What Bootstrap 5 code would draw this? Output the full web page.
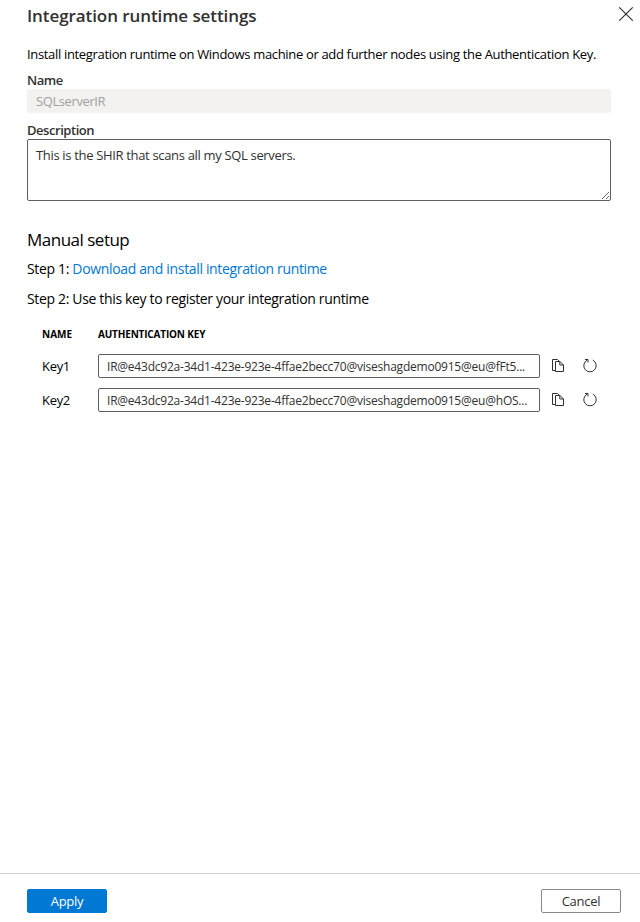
<!DOCTYPE html>
<html lang="en">
<head>
<meta charset="utf-8">
<meta name="viewport" content="width=device-width, initial-scale=1">
<title>Integration runtime settings</title>
<link href="https://cdn.jsdelivr.net/npm/bootstrap@5.3.0/dist/css/bootstrap.min.css" rel="stylesheet">
<script src="https://cdn.jsdelivr.net/npm/bootstrap@5.3.0/dist/js/bootstrap.bundle.min.js" defer></script>
<style>
body{font-family:"Segoe UI","Open Sans","Noto Sans",sans-serif;font-size:13px;line-height:20px;color:#000;background:#fff}
.panel{height:922px}
.panel-head{height:44px;padding:5px 6px 0 27px}
.panel-title{font-size:17px;line-height:22px;font-weight:600;color:#323130;letter-spacing:-.08px}
.close-btn{width:16px;height:16px;margin-top:1px}
.panel-main{padding:0 29px 0 27px}
.intro{height:27px;letter-spacing:-.333px;white-space:nowrap}
.field-label{font-weight:600;color:#323130;line-height:18px;letter-spacing:-.45px;display:block}
.form-control{font-size:12px;border:1px solid #605e5c;border-radius:2px;color:#323130;padding:0 8px}
.name-box{height:24px;min-height:0;line-height:22px;font-size:13px;letter-spacing:-.4px}
.name-box:disabled{background:#f3f2f1;border-color:#f3f2f1;color:#a19f9d}
.desc-box,textarea.form-control.desc-box{height:62px;min-height:0;padding-top:5px;line-height:20px;font-size:13px;letter-spacing:-.33px}
.section-title{font-size:17px;line-height:24px;font-weight:400;letter-spacing:-.5px;margin-top:27px}
.step{font-size:14px;line-height:20px;letter-spacing:-.343px}
.step a{color:#0078d4}
.step-one{margin:7px 0 10px}
.step-two{margin:0 0 17px}
.keys{padding:0 0 0 15px}
.keys-head{font-size:10px;font-weight:700;line-height:16px;margin-bottom:12px}
.auth-head{letter-spacing:-.17px}
.key-name{width:56px}
.key-row{height:24px;margin-bottom:10px}
.key-row .key-name{letter-spacing:-.3px}
.key-box{width:442px;height:24px;min-height:0;line-height:22px;letter-spacing:-.22px}
.icon-btn{width:16px;height:16px}
.copy-btn{margin-left:10px}
.renew-btn{margin-left:16px}
.panel-foot{height:49px;border-top:1px solid #d2d0ce;padding:15px 19px 0 27px}
.foot-btn{width:80px;height:24px;border-radius:2px;font-size:13px;line-height:22px;padding:0;letter-spacing:-.25px}
.btn-apply,.btn-apply:hover{background:#0078d4;border-color:#0078d4;color:#fff}
.btn-cancel{background:#fff;border-color:#8a8886;color:#323130}
</style>
</head>
<body>
<div class="panel d-flex flex-column">
  <header class="panel-head d-flex justify-content-between align-items-start">
    <h1 class="panel-title m-0">Integration runtime settings</h1>
    <button class="close-btn btn p-0 border-0 d-flex" aria-label="Close"><svg width="16" height="16" viewBox="0 0 16 16" fill="none" stroke="#323130" stroke-width="1.2"><path d="M1.3 1.3l13.4 13.4M14.7 1.3L1.3 14.7"/></svg></button>
  </header>
  <main class="panel-main flex-grow-1">
    <p class="intro m-0">Install integration runtime on Windows machine or add further nodes using the Authentication Key.</p>
    <label class="field-label" for="irName">Name</label>
    <input id="irName" class="form-control name-box" value="SQLserverIR" disabled>
    <label class="field-label mt-2" for="irDesc">Description</label>
    <textarea id="irDesc" class="form-control desc-box d-block">This is the SHIR that scans all my SQL servers.</textarea>
    <h2 class="section-title mb-0">Manual setup</h2>
    <p class="step step-one">Step 1: <a href="#" class="text-decoration-none">Download and install integration runtime</a></p>
    <p class="step step-two">Step 2: Use this key to register your integration runtime</p>
    <div class="keys">
      <div class="keys-head d-flex"><span class="key-name">NAME</span><span class="auth-head">AUTHENTICATION KEY</span></div>
      <div class="key-row d-flex align-items-center">
        <span class="key-name">Key1</span>
        <input class="form-control key-box" aria-label="Key1" value="IR@e43dc92a-34d1-423e-923e-4ffae2becc70@viseshagdemo0915@eu@fFt5..." readonly>
        <button class="icon-btn copy-btn btn p-0 border-0 d-flex" aria-label="Copy"><svg width="16" height="16"><use href="#copy"/></svg></button>
        <button class="icon-btn renew-btn btn p-0 border-0 d-flex" aria-label="Refresh"><svg width="16" height="16"><use href="#renew"/></svg></button>
      </div>
      <div class="key-row d-flex align-items-center">
        <span class="key-name">Key2</span>
        <input class="form-control key-box" aria-label="Key2" value="IR@e43dc92a-34d1-423e-923e-4ffae2becc70@viseshagdemo0915@eu@hOS..." readonly>
        <button class="icon-btn copy-btn btn p-0 border-0 d-flex" aria-label="Copy"><svg width="16" height="16"><use href="#copy"/></svg></button>
        <button class="icon-btn renew-btn btn p-0 border-0 d-flex" aria-label="Refresh"><svg width="16" height="16"><use href="#renew"/></svg></button>
      </div>
    </div>
  </main>
  <footer class="panel-foot d-flex justify-content-between align-items-start">
    <button class="btn foot-btn btn-apply">Apply</button>
    <button class="btn foot-btn btn-cancel">Cancel</button>
  </footer>
</div>
<svg class="d-none">
  <symbol id="copy" viewBox="0 0 16 16"><path d="M5.5 12.5H2.5V1.5H7.5L9.5 3.5M5.5 3.5H10L13.5 7V13.5H5.5ZM9.8 3.5V7H13.5" fill="none" stroke="#323130"/></symbol>
  <symbol id="renew" viewBox="0 0 16 16"><path d="M10.8 2.1A6.2 6.2 0 1 1 5.2 2.1M3 1.5H6V4.5" fill="none" stroke="#323130"/></symbol>
</svg>
</body>
</html>
